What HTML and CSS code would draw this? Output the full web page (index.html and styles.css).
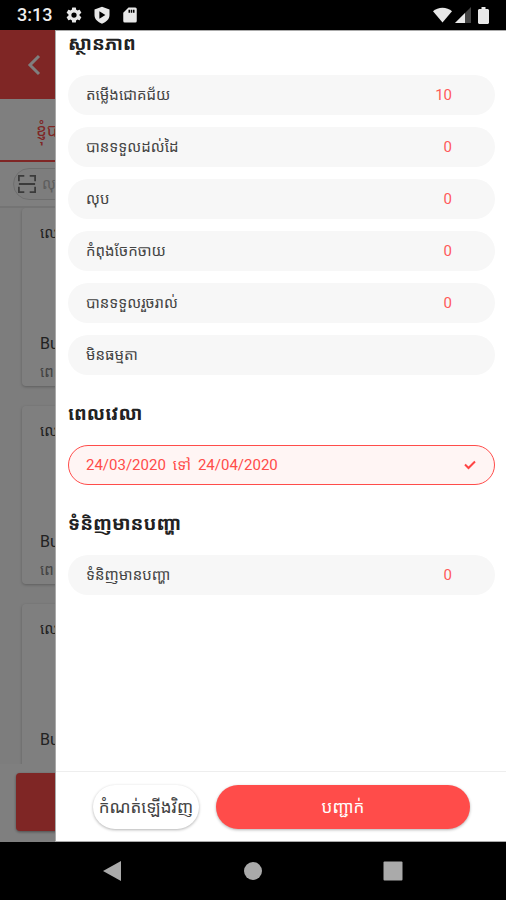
FILE: index.html
```html
<!DOCTYPE html>
<html lang="km">
<head>
<meta charset="utf-8">
<meta name="viewport" content="width=device-width, initial-scale=1">
<title>ស្ថានភាព</title>
<link rel="stylesheet" href="styles.css">
</head>
<body>
<header class="status-bar">
  <span class="clock">3:13</span>
  <svg class="icon" viewBox="0 0 24 24" aria-hidden="true"><path fill-rule="evenodd" d="M19.4 13a7.500 7.500 0 0 0 0-2l2.200-1.700c.2-.2.300-.4.100-.6l-2-3.500c-.1-.2-.4-.3-.6-.2l-2.500 1a7.500 7.500 0 0 0-1.700-1l-.4-2.600a.5.5 0 0 0-.5-.4h-4a.5.5 0 0 0-.5.400L9.100 5a7.500 7.500 0 0 0-1.700 1l-2.500-1c-.2-.1-.5 0-.6.200l-2 3.500c-.1.200-.1.500.100.600L4.600 11a7.500 7.500 0 0 0 0 2l-2.200 1.700c-.2.200-.2.400-.1.600l2 3.500c.1.200.4.300.6.200l2.500-1c.5.400 1.100.8 1.700 1l.4 2.600c0 .2.200.4.500.4h4c.3 0 .5-.2.500-.4l.4-2.600a7.500 7.500 0 0 0 1.700-1l2.500 1c.2.100.5 0 .6-.2l2-3.500c.1-.2.1-.5-.1-.6zM12 15.500a3.500 3.500 0 1 1 0-7 3.500 3.500 0 0 1 0 7z"/></svg>
  <svg class="icon" viewBox="0 0 24 24" aria-hidden="true"><path fill-rule="evenodd" d="M12 1l10 3.500V12c0 5.500-4.300 9.500-10 11.500C6.300 21.500 2 17.500 2 12V4.500zM8.500 7v10l8-5z"/></svg>
  <svg class="icon" viewBox="0 0 24 24" aria-hidden="true"><path fill-rule="evenodd" d="M10 2h9a2 2 0 0 1 2 2v16a2 2 0 0 1-2 2H5a2 2 0 0 1-2-2V9zM10 5v4h2V5zM13 5v4h2V5zM16 5v4h2V5z"/></svg>
  <span class="signals">
    <svg class="wifi" viewBox="0 0 20 16" aria-hidden="true"><path d="M0 4C5-1 15-1 20 4L10 16z"/></svg>
    <svg class="cell" viewBox="0 0 16 16" aria-hidden="true"><path class="dim" d="M0 16L16 0v16z"/><path d="M0 16L10 6v10z"/></svg>
    <svg class="battery" viewBox="0 0 11 17" aria-hidden="true"><path d="M3.500 0h4v2H10l1 1v13l-1 1H1l-1-1V3l1-1h2.500z"/></svg>
  </span>
</header>

<main class="app">
  <div class="page">
    <div class="title-bar">
      <button class="back" type="button" aria-label="Back"><svg viewBox="0 0 14 22" aria-hidden="true"><path d="M12 2L3 11l9 9"/></svg></button>
    </div>
    <div class="tabs"><a class="tab" href="#">ខ្ញុំបាន</a></div>
    <div class="search-row">
      <label class="search">
        <svg viewBox="0 0 20 20" aria-hidden="true"><path d="M1 7V1h6M13 1h6v6M19 13v6h-6M7 19H1v-6M1 10h18"/></svg>
        <input type="search" placeholder="លុប" aria-label="Search">
      </label>
    </div>
    <div class="cards">
      <article class="card"><p class="code">លេខ</p><p class="name">Bun</p><p class="time">ពេល</p></article>
      <article class="card"><p class="code">លេខ</p><p class="name">Bun</p><p class="time">ពេល</p></article>
      <article class="card"><p class="code">លេខ</p><p class="name">Bun</p><p class="time"></p></article>
    </div>
    <div class="page-action"><button type="button" aria-label="Submit"></button></div>
  </div>

  <div class="scrim"></div>

  <aside class="drawer">
    <div class="filters">
      <h2>ស្ថានភាព</h2>
      <div class="options">
        <button class="option" type="button">តម្លើងជោគជ័យ<span class="count">10</span></button>
        <button class="option" type="button">បានទទួលដល់ដៃ<span class="count">0</span></button>
        <button class="option" type="button">លុប<span class="count">0</span></button>
        <button class="option" type="button">កំពុងចែកចាយ<span class="count">0</span></button>
        <button class="option" type="button">បានទទួលរួចរាល់<span class="count">0</span></button>
        <button class="option" type="button">មិនធម្មតា</button>
      </div>
      <h2>ពេលវេលា</h2>
      <div class="options">
        <button class="option selected" type="button" aria-pressed="true"><span class="range"><span>24/03/2020</span><span>ទៅ</span><span>24/04/2020</span></span><svg class="check" viewBox="0 0 12 10" aria-hidden="true"><path d="M1 4.500L4.500 8 11 1.500"/></svg></button>
      </div>
      <h2>ទំនិញមានបញ្ហា</h2>
      <div class="options">
        <button class="option" type="button">ទំនិញមានបញ្ហា<span class="count">0</span></button>
      </div>
    </div>
    <div class="actions">
      <button class="reset" type="button">កំណត់ឡើងវិញ</button>
      <button class="confirm" type="button">បញ្ជាក់</button>
    </div>
  </aside>
</main>

<nav class="nav-bar">
  <button type="button" aria-label="Back"><svg viewBox="0 0 20 20" aria-hidden="true"><path d="M18 0v20L0 10z"/></svg></button>
  <button type="button" aria-label="Home"><svg viewBox="0 0 20 20" aria-hidden="true"><circle cx="10" cy="10" r="9"/></svg></button>
  <button type="button" aria-label="Recent apps"><svg viewBox="0 0 20 20" aria-hidden="true"><rect x="0.500" y="0.500" width="19" height="19" rx="1"/></svg></button>
</nav>
</body>
</html>
```
FILE: styles.css
```css
* {
  box-sizing: border-box;
}

body {
  margin: 0;
  height: 100vh;
  display: flex;
  flex-direction: column;
  background: #000;
  color: #444;
  font-family: Roboto, "Noto Sans Khmer", "Noto Sans", sans-serif;
  font-size: 15px;
  line-height: 20px;
}

button,
input {
  font: inherit;
  color: inherit;
  border: 0;
  margin: 0;
  padding: 0;
  background: none;
}

p,
h2 {
  margin: 0;
}

/* System status bar */
.status-bar {
  flex: none;
  height: 30px;
  display: flex;
  align-items: center;
  gap: 10px;
  padding: 0 17px;
  color: #eee;
  fill: #e8e8e8;
}

.clock {
  font-size: 18px;
  font-weight: 500;
  margin-right: 3px;
}

.icon {
  width: 18px;
  height: 18px;
}

.signals {
  margin-left: auto;
  display: flex;
  align-items: center;
  gap: 3px;
}

.wifi {
  width: 19px;
  height: 16px;
}

.cell {
  width: 16px;
  height: 16px;
  margin-right: 4px;
}

.dim {
  fill: #444;
}

.battery {
  width: 11px;
  height: 17px;
}

/* Page under the drawer */
.app {
  flex: 1;
  min-height: 0;
  position: relative;
  overflow: hidden;
}

.page {
  height: 100%;
  display: flex;
  flex-direction: column;
  background: #fafafa;
}

.title-bar {
  flex: none;
  height: 69px;
  display: flex;
  align-items: center;
  padding-left: 27px;
  background: #ff4c4a;
}

.back svg {
  display: block;
  width: 14px;
  height: 22px;
  fill: none;
  stroke: #fff;
  stroke-width: 3;
}

.tabs {
  flex: none;
  height: 63px;
  display: flex;
  align-items: center;
  padding-left: 36px;
  background: #fff;
  border-bottom: 2px solid #ff4c4a;
}

.tab {
  color: #ff4c4a;
  font-size: 17px;
  text-decoration: none;
  white-space: nowrap;
}

.search-row {
  flex: none;
  height: 46px;
  padding: 6px 13px;
  background: #fff;
  border-bottom: 2px solid #e8e8e8;
}

.search {
  display: flex;
  align-items: center;
  gap: 6px;
  height: 32px;
  padding: 0 4px;
  border: 1px solid #ddd;
  border-radius: 16px;
  background: #fafafa;
}

.search svg {
  width: 18px;
  height: 18px;
  fill: none;
  stroke: #777;
  stroke-width: 2;
}

.search input {
  flex: 1;
  min-width: 0;
}

.search input::placeholder {
  color: #bbb;
}

.cards {
  flex: 1;
  min-height: 0;
  overflow: hidden;
  display: flex;
  flex-direction: column;
  gap: 20px;
  padding: 0 22px;
}

.card {
  flex: none;
  padding: 15px 18px 4px;
  background: #fff;
  border-radius: 4px;
  box-shadow: 0 1px 3px rgba(0, 0, 0, 0.25);
}

.name {
  margin-top: 91px;
  font-size: 16px;
}

.time {
  min-height: 20px;
  margin-top: 8px;
  color: #888;
}

.page-action {
  flex: none;
  padding: 9px 16px 11px;
  background: #fff;
}

.page-action button {
  display: block;
  width: 100%;
  height: 58px;
  border-radius: 4px;
  background: #ff4c4a;
  box-shadow: 0 1px 3px rgba(0, 0, 0, 0.4);
}

.scrim {
  position: absolute;
  inset: 0;
  background: rgba(0, 0, 0, 0.5);
}

/* Filter drawer */
.drawer {
  position: absolute;
  inset: 0 0 0 55px;
  display: flex;
  flex-direction: column;
  background: #fff;
  border: 1px solid #aaa;
  border-width: 1px 0 1px 1px;
}

.filters {
  flex: 1;
  min-height: 0;
  overflow: hidden;
  padding: 0 11px 0 12px;
}

.filters h2 {
  margin: 27px 0 19px;
  font-size: 19px;
  font-weight: 700;
  line-height: 24px;
  color: #222;
}

.filters h2:first-child {
  margin-top: 1px;
}

.options {
  display: flex;
  flex-direction: column;
  gap: 12px;
}

.option {
  display: flex;
  align-items: center;
  height: 40px;
  padding: 0 43px 0 18px;
  border-radius: 20px;
  background: #f7f7f7;
  text-align: left;
}

.count {
  margin-left: auto;
  color: #ff5a5a;
}

.selected {
  padding: 0 18px 0 17px;
  border: 1px solid #ff4c4a;
  background: #fff5f4;
  color: #ff4c4a;
}

.range {
  display: flex;
  gap: 7px;
}

.check {
  width: 12px;
  height: 10px;
  margin-left: auto;
  fill: none;
  stroke: #f44;
  stroke-width: 2;
}

.actions {
  flex: none;
  display: flex;
  gap: 17px;
  padding: 13px 36px 12px 37px;
  border-top: 1px solid #eee;
}

.actions button {
  height: 44px;
  border-radius: 22px;
  font-size: 17px;
  white-space: nowrap;
  box-shadow: 0 1px 3px rgba(0, 0, 0, 0.3);
}

.reset {
  flex: 5 1 0;
  background: #fff;
}

.actions .confirm {
  flex: 12 1 0;
  background: #ff4c4a;
  color: #fff;
}

/* System navigation */
.nav-bar {
  flex: none;
  height: 58px;
  display: flex;
  justify-content: center;
  align-items: center;
  gap: 120px;
}

.nav-bar svg {
  display: block;
  width: 20px;
  height: 20px;
  fill: #aaa;
}
```
